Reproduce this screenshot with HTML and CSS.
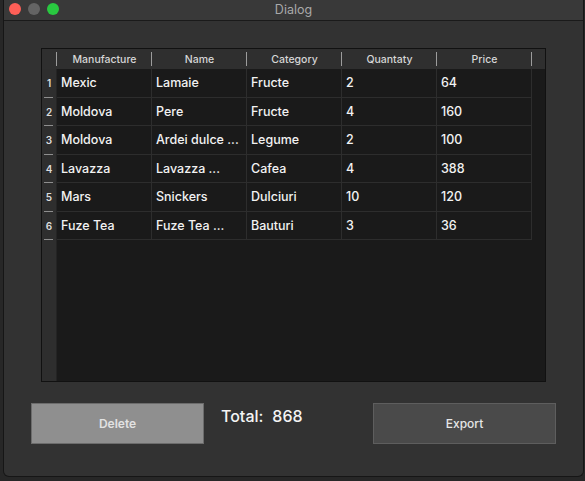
FILE: index.html
```html
<!DOCTYPE html>
<html>
<head>
<meta charset="utf-8">
<link rel="stylesheet" href="styles.css">
</head>
<body>
<div class="window">
  <div class="titlebar">
    <div class="lights">
      <span class="light red"></span>
      <span class="light grey"></span>
      <span class="light green"></span>
    </div>
    <div class="title">Dialog</div>
    <div></div>
  </div>
  <div class="content">
    <div class="table">
      <div class="corner"></div>
      <div class="hcell">Manufacture</div>
      <div class="hcell">Name</div>
      <div class="hcell">Category</div>
      <div class="hcell">Quantaty</div>
      <div class="hcell">Price</div>
      <div class="hfill"></div>

      <div class="vcell">1</div>
      <div class="cell">Mexic</div><div class="cell">Lamaie</div><div class="cell">Fructe</div><div class="cell">2</div><div class="cell">64</div><div class="fill"></div>

      <div class="vcell">2</div>
      <div class="cell">Moldova</div><div class="cell">Pere</div><div class="cell">Fructe</div><div class="cell">4</div><div class="cell">160</div><div class="fill"></div>

      <div class="vcell">3</div>
      <div class="cell">Moldova</div><div class="cell">Ardei dulce ...</div><div class="cell">Legume</div><div class="cell">2</div><div class="cell">100</div><div class="fill"></div>

      <div class="vcell">4</div>
      <div class="cell">Lavazza</div><div class="cell">Lavazza ...</div><div class="cell">Cafea</div><div class="cell">4</div><div class="cell">388</div><div class="fill"></div>

      <div class="vcell">5</div>
      <div class="cell">Mars</div><div class="cell">Snickers</div><div class="cell">Dulciuri</div><div class="cell">10</div><div class="cell">120</div><div class="fill"></div>

      <div class="vcell">6</div>
      <div class="cell">Fuze Tea</div><div class="cell">Fuze Tea ...</div><div class="cell">Bauturi</div><div class="cell">3</div><div class="cell">36</div><div class="fill"></div>

      <div class="vrest"></div>
    </div>
    <div class="footer">
      <button class="btn delete">Delete</button>
      <div class="total"><span>Total:</span><span>868</span></div>
      <button class="btn export">Export</button>
    </div>
  </div>
</div>
</body>
</html>
```

FILE: styles.css
```css
* { box-sizing: border-box; }
html, body { margin: 0; padding: 0; }
body {
  background: #272727;
  width: 585px;
  height: 481px;
  font-family: "Inter", "Liberation Sans", sans-serif;
  overflow: hidden;
}
.window {
  margin: 0 1px 0 3px;
  height: 477px;
  background: #323232;
  border: 1px solid #161616;
  border-top: none;
  border-radius: 0 0 6px 6px;
  display: flex;
  flex-direction: column;
}
.titlebar {
  height: 21px;
  background: #393939;
  border-bottom: 1px solid #1a1a1a;
  display: grid;
  grid-template-columns: 1fr auto 1fr;
  align-items: center;
}
.lights {
  display: flex;
  gap: 7px;
  padding-left: 5px;
  padding-bottom: 2px;
}
.light {
  width: 12px;
  height: 12px;
  border-radius: 50%;
  display: block;
}
.red { background: #fe5f57; }
.grey { background: #646464; }
.green { background: #29c840; }
.title {
  color: #a9a9a9;
  font-size: 12.5px;
  padding-bottom: 2px;
}
.content {
  flex: 1;
  display: flex;
  flex-direction: column;
  padding-top: 27px;
}
.table {
  margin-left: 37px;
  width: 505px;
  height: 334px;
  border: 1px solid #111;
  background: #1a1a1a;
  display: grid;
  grid-template-columns: 15px repeat(5, 95px) 1fr;
  grid-template-rows: 20px repeat(6, 28.5px) 1fr;
}
.corner, .hcell, .hfill {
  background: #2f2f2f;
  position: relative;
}
.corner::after, .hcell::after {
  content: "";
  position: absolute;
  right: 0;
  top: 3px;
  bottom: 3px;
  width: 1px;
  background: #9c9c9c;
}
.hcell {
  color: #d6d6d6;
  font-size: 10.5px;
  font-weight: 500;
  display: flex;
  align-items: center;
  justify-content: center;
}
.vcell {
  background: #2e2e2e;
  border-right: 1px solid #242424;
  color: #dcdcdc;
  font-size: 10px;
  font-weight: 600;
  display: flex;
  align-items: center;
  justify-content: center;
  position: relative;
}
.vcell::after {
  content: "";
  position: absolute;
  left: 2px;
  right: 3px;
  bottom: 0;
  height: 1px;
  background: #8e8e8e;
}
.vrest {
  background: #2e2e2e;
  border-right: 1px solid #242424;
}
.cell {
  border-right: 1px solid #2d2d2d;
  border-bottom: 1px solid #2d2d2d;
  color: #f2f2f2;
  font-size: 12.5px;
  font-weight: 500;
  display: flex;
  align-items: center;
  padding-left: 4px;
  white-space: nowrap;
}
.footer {
  margin-top: 21px;
  display: flex;
  align-items: flex-start;
  padding-left: 27px;
  padding-right: 27px;
}
.btn {
  height: 41px;
  font-family: inherit;
  font-size: 12px;
  font-weight: 500;
  border-radius: 0;
  padding: 0;
}
.delete {
  width: 173px;
  background: #8f8f8f;
  border: 1px solid #6c6c6c;
  color: #e2e2e2;
  font-weight: 600;
}
.export {
  width: 183px;
  margin-left: auto;
  background: #4a4a4a;
  border: 1px solid #5e5e5e;
  color: #e6e6e6;
}
.total {
  margin-left: 17px;
  margin-top: 2px;
  display: flex;
  gap: 9px;
  color: #f4f4f4;
  font-size: 16px;
  font-weight: 500;
  line-height: 22px;
}
```
